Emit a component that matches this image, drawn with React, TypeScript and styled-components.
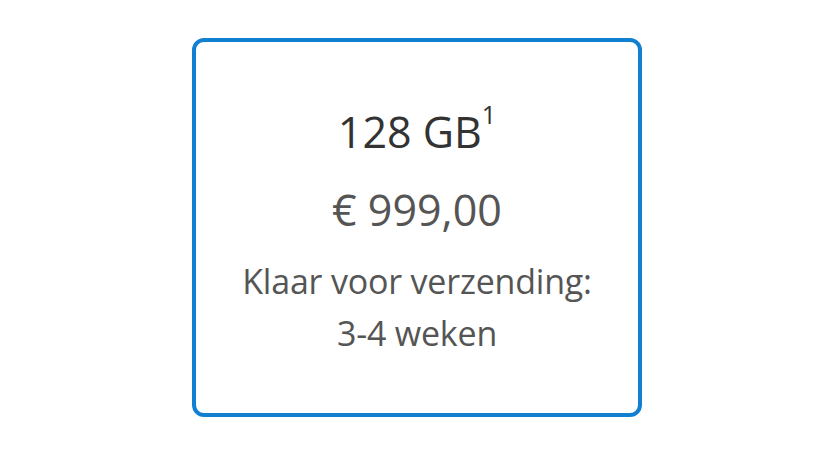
import React from 'react';
import styled, { createGlobalStyle } from 'styled-components';

const GlobalStyle = createGlobalStyle`
    html, body {
        margin: 0;
        padding: 0;
        background: #ffffff;
    }

    #root {
        width: 100vw;
        height: 100vh;
    }
`;

const Page = styled.div`
    width: 100%;
    height: 100%;

    display: flex;
    align-items: center;
    justify-content: center;

    font-family: "Open Sans", "Noto Sans", sans-serif;
`;

const Option = styled.div<{ $selected?: boolean }>`
    width: 450px;
    height: 379px;
    box-sizing: border-box;
    margin-right: 6px;

    display: flex;
    flex-direction: column;
    align-items: center;

    padding-top: 66px;

    border: 4px solid ${props => props.$selected ? '#1180d0' : '#d6d6d6'};
    border-radius: 12px;
`;

const Capacity = styled.div`
    font-size: 43px;
    line-height: 48px;
    color: #333333;

    sup {
        font-size: 25px;
        line-height: 0;
        position: relative;
        top: -9px;
        margin-left: 0;
    }
`;

const Price = styled.div`
    margin-top: 30px;

    font-size: 43px;
    line-height: 48px;
    color: #555555;
`;

const Shipping = styled.div`
    margin-top: 21px;

    font-size: 34px;
    line-height: 52px;
    color: #555555;
    text-align: center;
    letter-spacing: -0.2px;
`;

export default function App(): JSX.Element {
    return (
        <>
            <GlobalStyle />
            <Page>
                <Option $selected>
                    <Capacity>128 GB<sup>1</sup></Capacity>
                    <Price>€ 999,00</Price>
                    <Shipping>
                        Klaar voor verzending:<br />
                        3-4 weken
                    </Shipping>
                </Option>
            </Page>
        </>
    );
}
